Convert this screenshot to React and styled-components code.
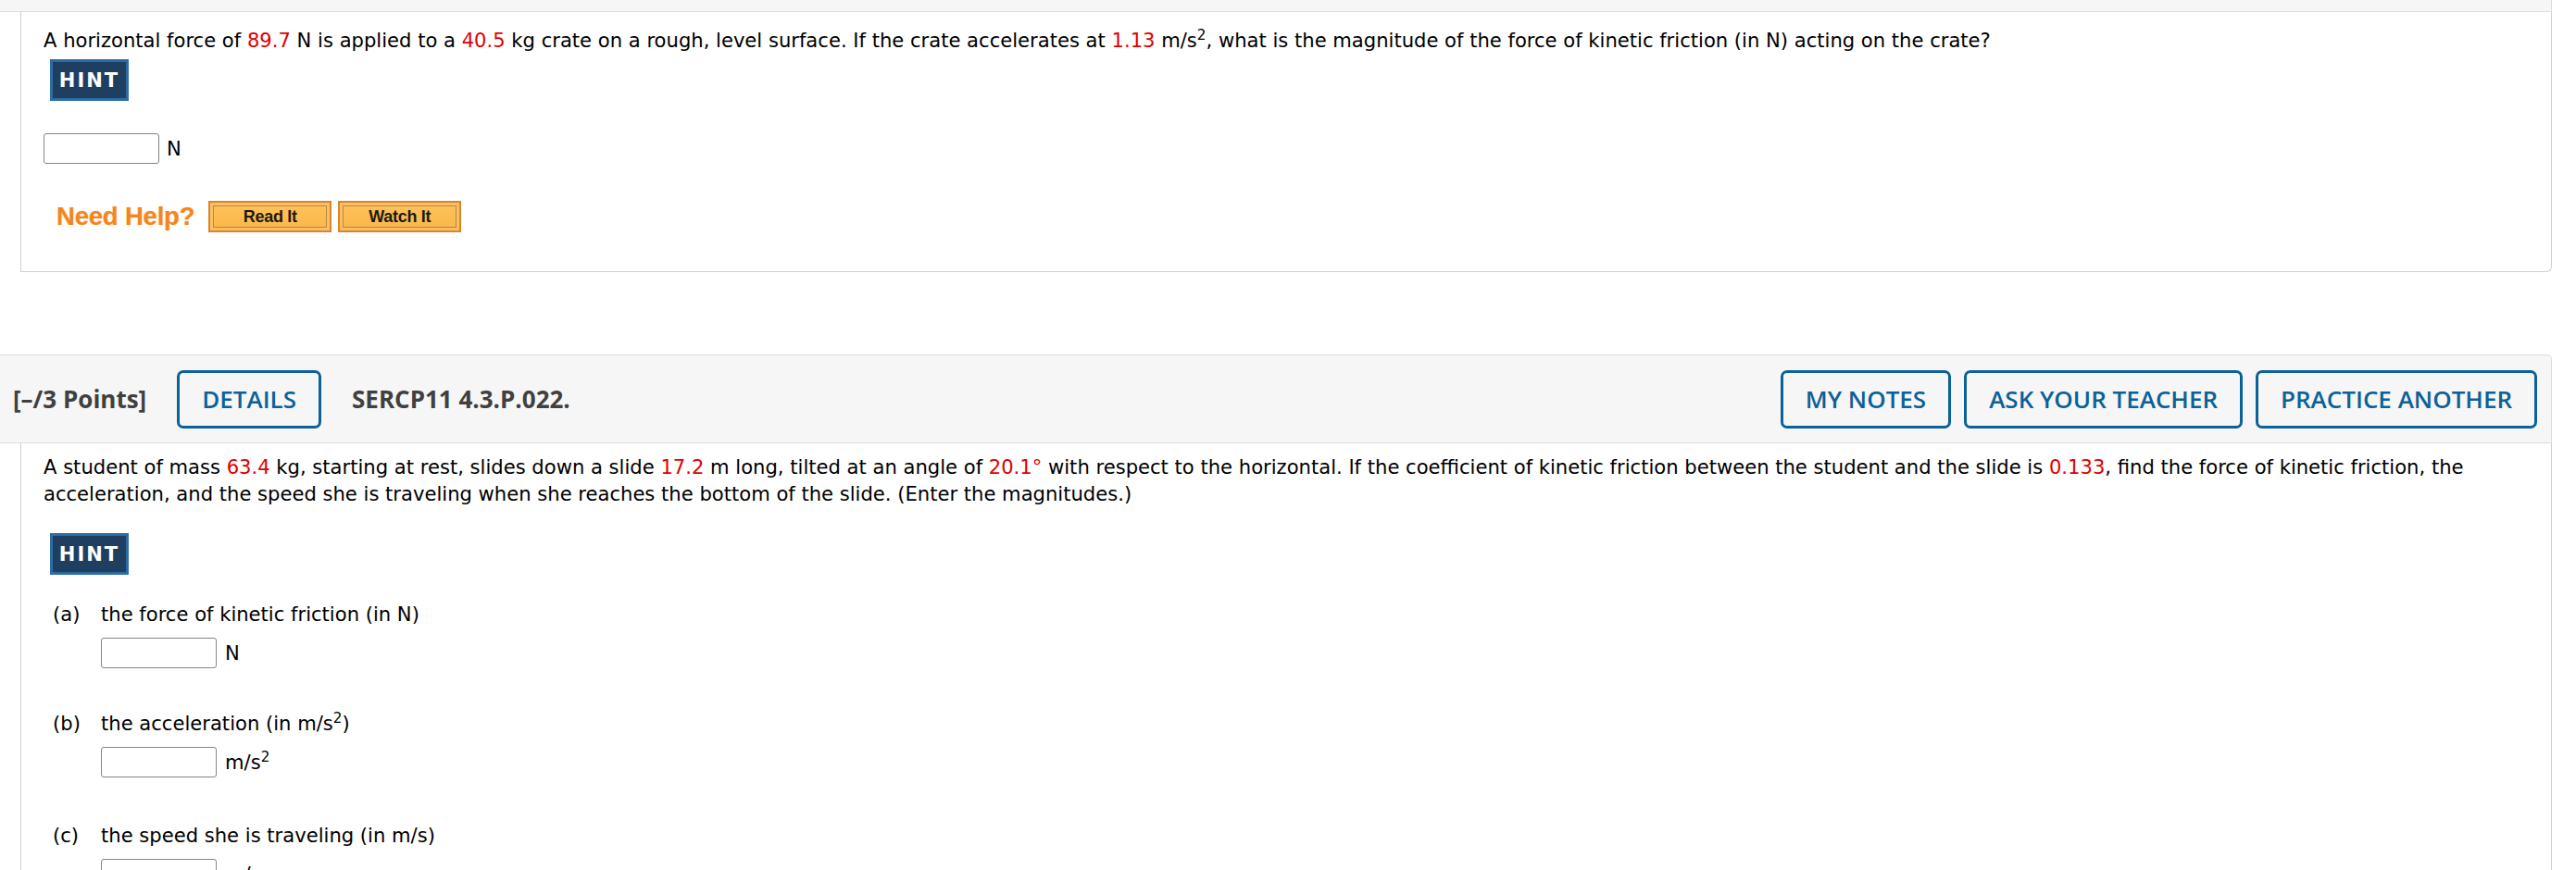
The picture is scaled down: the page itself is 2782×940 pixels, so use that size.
import React from "react";
import styled, { createGlobalStyle, css } from "styled-components";

const Global = createGlobalStyle`
  html, body { margin: 0; padding: 0; background: #ffffff; }
  body {
    font-family: "DejaVu Sans", Verdana, sans-serif;
    color: #000;
    -webkit-font-smoothing: antialiased;
  }
  #root { width: 2782px; }
`;

const Page = styled.div`
  width: 2756px;
  display: flex;
  flex-direction: column;
`;

const Card = styled.section`
  display: flex;
  flex-direction: column;
  margin-top: ${(p) => p.$gap || 0}px;
`;

const Header = styled.div`
  box-sizing: border-box;
  background: #f6f6f6;
  border: 1px solid #dddddd;
  border-left: none;
  border-top-right-radius: 5px;
  height: ${(p) => p.$height}px;
  display: flex;
  align-items: center;
  padding: 0 15px 0 14px;
  gap: 33px;
  ${(p) =>
    p.$cut &&
    css`
      border-top: none;
      border-top-right-radius: 0;
    `}
`;

const PointsLabel = styled.span`
  font-family: "Open Sans", sans-serif;
  font-weight: 700;
  font-size: 26px;
  color: #404040;
  white-space: nowrap;
`;

const ButtonGroup = styled.div`
  margin-left: auto;
  display: flex;
  gap: 14px;
`;

const OutlineButton = styled.button`
  box-sizing: border-box;
  height: 63px;
  padding: 0 24px;
  background: transparent;
  border: 3px solid #0b6198;
  border-radius: 7px;
  font-family: "Open Sans", sans-serif;
  font-weight: 600;
  font-size: 26px;
  color: #0b6198;
  white-space: nowrap;
  cursor: pointer;
`;

const Body = styled.div`
  box-sizing: border-box;
  margin-left: 22px;
  border: 1px solid #cfcfcf;
  border-top: none;
  border-bottom-right-radius: 6px;
  padding: ${(p) => p.$padTop}px 24px ${(p) => p.$padBottom}px 24px;
  display: flex;
  flex-direction: column;
  align-items: flex-start;
`;

const Prompt = styled.p`
  margin: 0;
  font-size: 21.1px;
  line-height: 29px;
  max-width: 2690px;
`;

const Val = styled.span`
  color: #e00000;
`;

const Sup = styled.sup`
  font-size: 0.72em;
  line-height: 0;
`;

const HintButton = styled.button`
  box-sizing: border-box;
  width: 85px;
  height: 45px;
  margin: ${(p) => p.$top}px 0 0 7px;
  padding: 0;
  background: #1f3f60;
  border: 3px solid #2c6ca6;
  color: #ffffff;
  font-family: "DejaVu Sans", Verdana, sans-serif;
  font-weight: 700;
  font-size: 21px;
  letter-spacing: 2px;
  cursor: pointer;
`;

const AnswerRow = styled.div`
  display: flex;
  align-items: center;
  gap: 8px;
  margin-top: ${(p) => p.$top}px;
  font-size: 21.1px;
  line-height: 29px;
`;

const AnswerInput = styled.input`
  box-sizing: border-box;
  width: 125px;
  height: 33px;
  border: 1px solid #858585;
  border-radius: 3px;
  background: #fff;
  margin: 0;
  padding: 0 6px;
`;

const HelpRow = styled.div`
  display: flex;
  align-items: center;
  margin: 40px 0 0 14px;
`;

const NeedHelp = styled.span`
  font-family: "Liberation Sans", Arial, sans-serif;
  font-weight: 700;
  font-size: 27.5px;
  color: #f5861f;
  text-shadow: 0 0 1px rgba(245, 134, 31, 0.6);
  margin-right: 15px;
  letter-spacing: -0.2px;
`;

const HelpButton = styled.button`
  box-sizing: border-box;
  width: 133px;
  height: 34px;
  margin-right: 7px;
  padding: 0;
  background: linear-gradient(#fdc35e, #fcb646);
  border: 2px solid #d9852c;
  box-shadow: inset 0 0 0 3px #fcc063, inset 0 0 0 4px #b88843;
  font-family: "Liberation Sans", Arial, sans-serif;
  font-weight: 700;
  font-size: 18px;
  color: #1e1a12;
  letter-spacing: -0.3px;
  cursor: pointer;
`;

const Part = styled.div`
  display: grid;
  grid-template-columns: 52px auto;
  margin: ${(p) => p.$top}px 0 0 10px;
  font-size: 21.1px;
  line-height: 29px;
`;

const PartLetter = styled.span`
  grid-column: 1;
`;

const PartText = styled.span`
  grid-column: 2;
`;

const PartAnswer = styled(AnswerRow)`
  grid-column: 2;
  gap: 9px;
`;

function Answer({ unit, top }) {
  return (
    <AnswerRow $top={top}>
      <AnswerInput type="text" aria-label="answer" />
      <span>{unit}</span>
    </AnswerRow>
  );
}

const parts = [
  { id: "a", text: <>the force of kinetic friction (in N)</>, unit: <>N</>, top: 28 },
  {
    id: "b",
    text: (
      <>
        the acceleration (in m/s<Sup>2</Sup>)
      </>
    ),
    unit: (
      <>
        m/s<Sup>2</Sup>
      </>
    ),
    top: 45,
  },
  { id: "c", text: <>the speed she is traveling (in m/s)</>, unit: <>m/s</>, top: 48 },
];

export default function App() {
  return (
    <>
      <Global />
      <Page>
        <Card>
          <Header $cut $height={13} />
          <Body $padTop={16} $padBottom={42}>
            <Prompt>
              A horizontal force of <Val>89.7</Val> N is applied to a <Val>40.5</Val> kg crate on a
              rough, level surface. If the crate accelerates at <Val>1.13</Val> m/s<Sup>2</Sup>, what
              is the magnitude of the force of kinetic friction (in N) acting on the crate?
            </Prompt>
            <HintButton $top={6}>HINT</HintButton>
            <Answer unit="N" top={35} />
            <HelpRow>
              <NeedHelp>Need Help?</NeedHelp>
              <HelpButton>Read It</HelpButton>
              <HelpButton>Watch It</HelpButton>
            </HelpRow>
          </Body>
        </Card>

        <Card $gap={89}>
          <Header $height={96}>
            <PointsLabel>[–/3 Points]</PointsLabel>
            <OutlineButton>DETAILS</OutlineButton>
            <PointsLabel>SERCP11 4.3.P.022.</PointsLabel>
            <ButtonGroup>
              <OutlineButton>MY NOTES</OutlineButton>
              <OutlineButton>ASK YOUR TEACHER</OutlineButton>
              <OutlineButton>PRACTICE ANOTHER</OutlineButton>
            </ButtonGroup>
          </Header>
          <Body $padTop={11} $padBottom={40}>
            <Prompt>
              A student of mass <Val>63.4</Val> kg, starting at rest, slides down a slide{" "}
              <Val>17.2</Val> m long, tilted at an angle of <Val>20.1°</Val> with respect to the
              horizontal. If the coefficient of kinetic friction between the student and the slide is{" "}
              <Val>0.133</Val>, find the force of kinetic friction, the acceleration, and the speed she
              is traveling when she reaches the bottom of the slide. (Enter the magnitudes.)
            </Prompt>
            <HintButton $top={28}>HINT</HintButton>
            {parts.map((p) => (
              <Part key={p.id} $top={p.top}>
                <PartLetter>({p.id})</PartLetter>
                <PartText>{p.text}</PartText>
                <PartAnswer $top={11}>
                  <AnswerInput type="text" aria-label={`answer ${p.id}`} />
                  <span>{p.unit}</span>
                </PartAnswer>
              </Part>
            ))}
          </Body>
        </Card>
      </Page>
    </>
  );
}
